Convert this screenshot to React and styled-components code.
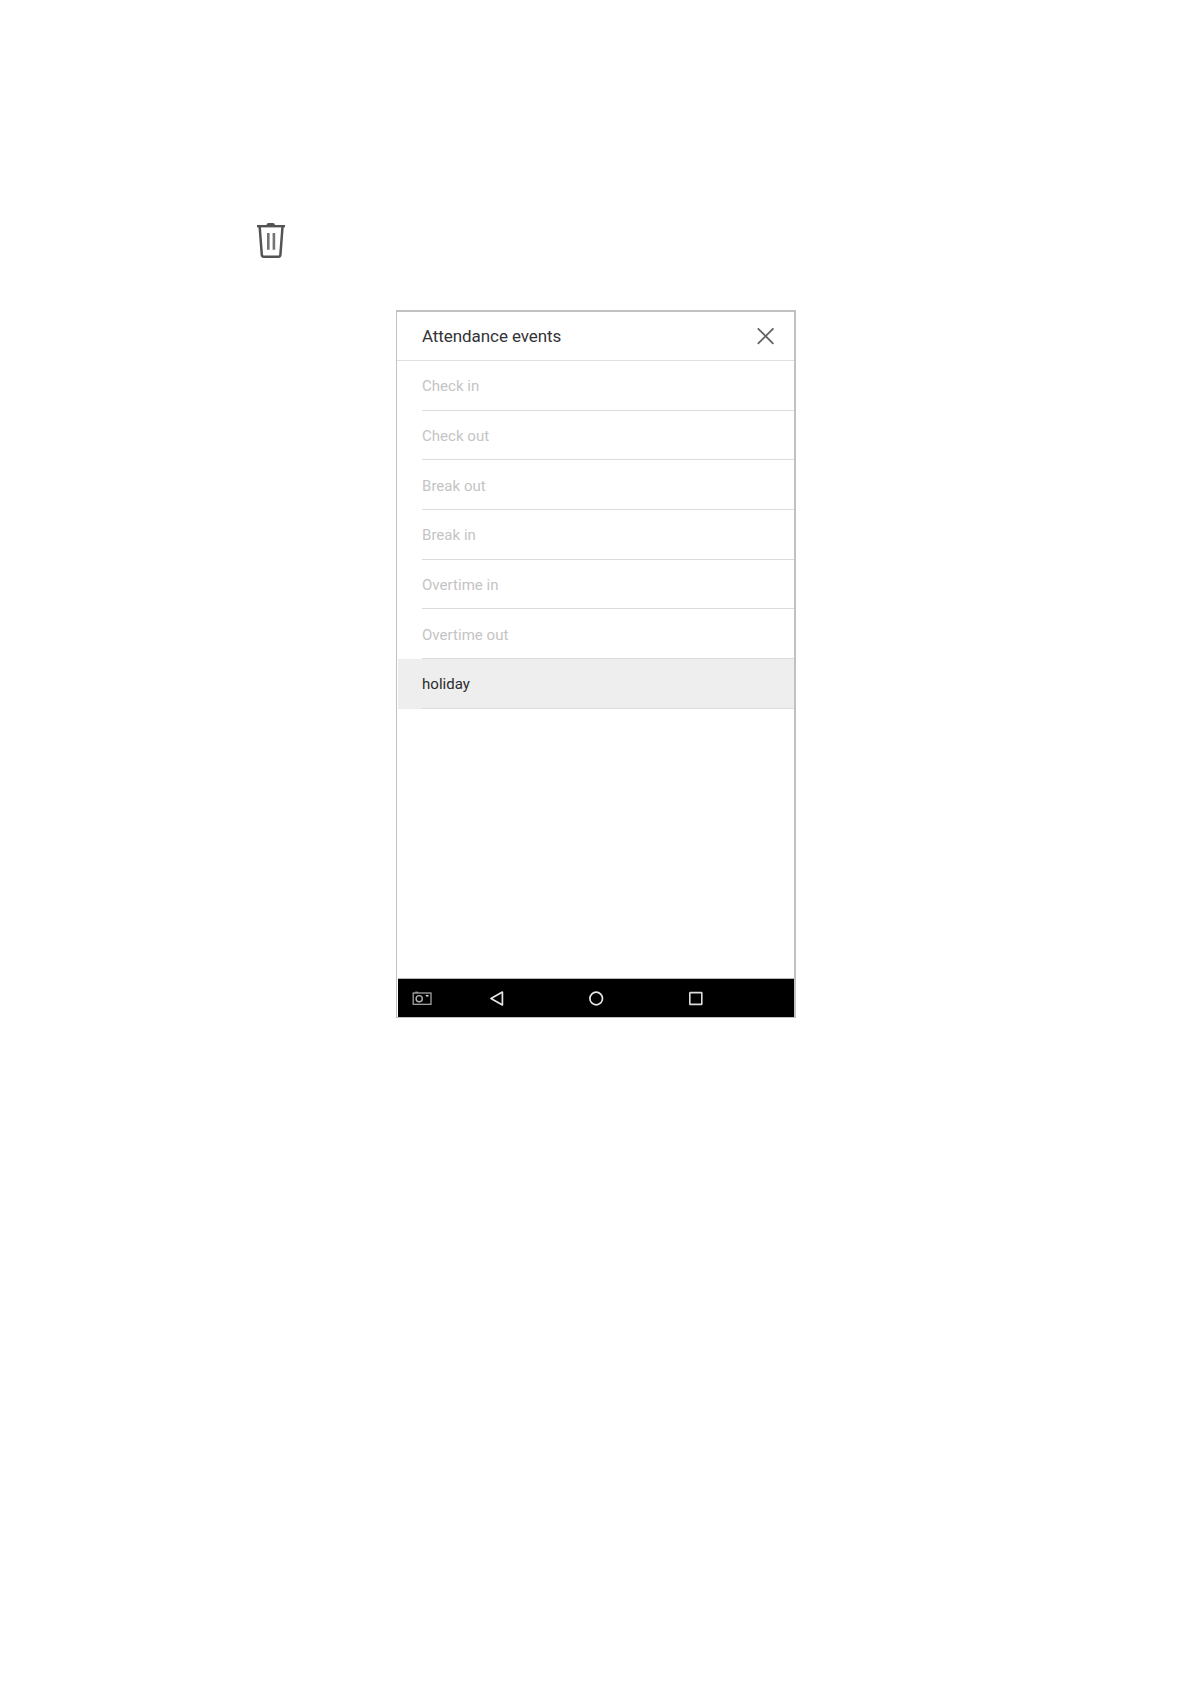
import styled, { createGlobalStyle } from "styled-components";

const GlobalStyle = createGlobalStyle`
  * {
    box-sizing: border-box;
  }

  body {
    margin: 0;
    background: #ffffff;
  }
`;

const Page = styled.main`
  display: flex;
  flex-direction: column;
  align-items: flex-start;
  width: 1191px;
  height: 1684px;
  padding: 222px 0 0 256px;
  background: #ffffff;
  font-family: Roboto, "Liberation Sans", sans-serif;
`;

const Icon = styled.svg`
  display: block;
  flex: none;
  overflow: visible;
`;

const Screen = styled.section`
  display: flex;
  flex-direction: column;
  width: 400px;
  height: 708px;
  margin: 50px 0 0 140px;
  border: solid #c1c1c1;
  border-width: 2px 2px 1px 1px;
  background: #ffffff;
`;

const Header = styled.header`
  display: flex;
  align-items: center;
  justify-content: space-between;
  height: 49px;
  padding: 0 20px 0 25px;
  border-bottom: 1px solid #dfdfdf;
`;

const Title = styled.h1`
  margin: 0;
  font-size: 17px;
  line-height: 20px;
  font-weight: 400;
  letter-spacing: -0.08px;
  color: #333335;
`;

const CloseButton = styled.button`
  padding: 0;
  border: none;
  background: none;
`;

const EventList = styled.ul`
  margin: 0;
  padding: 0 0 0 1px;
  list-style: none;
`;

const EventRow = styled.li`
  height: 49.7px;
  padding-left: 24px;
  background: ${({ $selected }) => ($selected ? "#eeeeee" : "transparent")};
  color: ${({ $selected }) => ($selected ? "#2b2b2e" : "#c4c4c4")};
`;

const EventName = styled.div`
  display: flex;
  align-items: center;
  height: 100%;
  padding-top: 2px;
  border-bottom: 1px solid #dcdcdc;
  font-size: 15px;
  letter-spacing: 0.03px;
`;

const NavBar = styled.nav`
  display: flex;
  align-items: center;
  height: 39px;
  margin-top: auto;
  margin-left: 1px;
  padding-left: 15px;
  border-top: 1px solid #b5b5b5;
  background: #000000;
`;

const NavButton = styled.button`
  padding: 0;
  margin-left: ${({ $gap }) => $gap || 0}px;
  border: none;
  background: none;
`;

const EVENTS = [
  { name: "Check in" },
  { name: "Check out" },
  { name: "Break out" },
  { name: "Break in" },
  { name: "Overtime in" },
  { name: "Overtime out" },
  { name: "holiday", selected: true },
];

function TrashIcon() {
  return (
    <Icon width="30" height="38" viewBox="0 0 30 38" fill="none" stroke="#535353">
      <path d="M10.5 4V3.2Q10.5 1 12.7 1H16.8Q19 1 19 3.2V4Z" fill="#535353" stroke="none" />
      <path d="M1 4.2H29" strokeWidth="2.4" />
      <path d="M3.7 5L5.8 32.8Q6 34.7 7.8 34.7H22.4Q24.2 34.7 24.4 32.8L26.5 5" strokeWidth="2.5" />
      <path d="M12.3 11V27.7M17.9 11V27.7" strokeWidth="2.6" stroke="#747474" />
    </Icon>
  );
}

function CloseIcon() {
  return (
    <Icon width="17" height="17" viewBox="0 0 17 17" fill="none" stroke="#626262">
      <path d="M0.8 0.3L16.4 15.9M16.4 0.3L0.8 15.9" strokeWidth="1.8" />
    </Icon>
  );
}

function CameraIcon() {
  return (
    <Icon width="19" height="13" viewBox="0 0 19 13" fill="none" stroke="#b0b0b0">
      <rect x="0.2" y="1" width="17.8" height="11.3" strokeWidth="1.2" />
      <path d="M2.2 0.2H5.2" />
      <circle cx="6.2" cy="6.7" r="3.1" strokeWidth="1.4" />
      <path d="M12.9 3.7H15.5" strokeWidth="1.6" stroke="#d8d8d8" />
    </Icon>
  );
}

function BackIcon() {
  return (
    <Icon width="14" height="15" viewBox="0 0 14 15" fill="none" stroke="#e6e6e6">
      <path d="M12.4 1.1V13.9L1 7.5Z" strokeWidth="1.7" strokeLinejoin="round" />
    </Icon>
  );
}

function HomeIcon() {
  return (
    <Icon width="15" height="15" viewBox="0 0 15 15" fill="none" stroke="#e6e6e6">
      <circle cx="7.2" cy="7.5" r="6.3" strokeWidth="1.7" />
    </Icon>
  );
}

function RecentIcon() {
  return (
    <Icon width="14" height="13" viewBox="0 0 14 13" fill="none" stroke="#dcdcdc">
      <rect x="0.8" y="0.6" width="12" height="11.8" rx="0.4" strokeWidth="1.6" />
    </Icon>
  );
}

export default function App() {
  return (
    <>
      <GlobalStyle />
      <Page>
        <TrashIcon />
        <Screen>
          <Header>
            <Title>Attendance events</Title>
            <CloseButton aria-label="Close">
              <CloseIcon />
            </CloseButton>
          </Header>
          <EventList>
            {EVENTS.map(({ name, selected }) => (
              <EventRow key={name} $selected={selected}>
                <EventName>{name}</EventName>
              </EventRow>
            ))}
          </EventList>
          <NavBar>
            <NavButton aria-label="Screenshot">
              <CameraIcon />
            </NavButton>
            <NavButton aria-label="Back" $gap={58}>
              <BackIcon />
            </NavButton>
            <NavButton aria-label="Home" $gap={85}>
              <HomeIcon />
            </NavButton>
            <NavButton aria-label="Recent apps" $gap={85}>
              <RecentIcon />
            </NavButton>
          </NavBar>
        </Screen>
      </Page>
    </>
  );
}
